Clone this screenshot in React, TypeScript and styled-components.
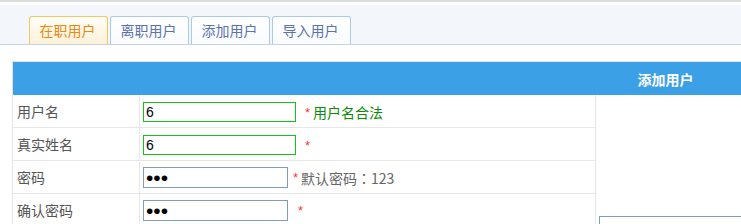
import type { ReactNode } from 'react';
import styled, { createGlobalStyle } from 'styled-components';

const GlobalStyle = createGlobalStyle`
  html, body {
    margin: 0;
    padding: 0;
    background: #fff;
    overflow: hidden;
    font-family: 'Noto Sans CJK SC', 'Liberation Sans', sans-serif;
    font-size: 14px;
  }
`;

// TC 字体的全角冒号居中显示，和原图一致
const Colon = styled.span`
  font-family: 'Noto Sans CJK TC', 'Noto Sans CJK SC', sans-serif;
`;

const tabs = ['在职用户', '离职用户', '添加用户', '导入用户'];

type FieldRow = {
  label: string;
  type: 'text' | 'password';
  value: string;
  ok?: boolean;
  starGap: number;
  note?: ReactNode;
  noteOk?: boolean;
};

const fields: FieldRow[] = [
  { label: '用户名', type: 'text', value: '6', ok: true, starGap: 9, note: '用户名合法', noteOk: true },
  { label: '真实姓名', type: 'text', value: '6', ok: true, starGap: 9 },
  {
    label: '密码',
    type: 'password',
    value: '123',
    starGap: 5,
    note: (
      <>
        默认密码<Colon>：</Colon>123
      </>
    ),
  },
  { label: '确认密码', type: 'password', value: '123', starGap: 10 },
];

const App = () => {
  return (
    <>
      <GlobalStyle />
      <TopLine />
      <TabBar>
        {tabs.map((t, i) => (
          <Tab key={t} $active={i === 0}>
            {t}
          </Tab>
        ))}
      </TabBar>
      <FormTable>
        <colgroup>
          <col style={{ width: 127 }} />
          <col style={{ width: 456 }} />
          <col />
        </colgroup>
        <thead>
          <tr>
            <HeadCell colSpan={3}>添加用户</HeadCell>
          </tr>
        </thead>
        <tbody>
          {fields.map((f, i) => (
            <tr key={f.label}>
              <LabelCell>{f.label}</LabelCell>
              <InputCell>
                <Field
                  type={f.type}
                  defaultValue={f.value}
                  $ok={f.ok}
                  readOnly
                />
                <Star $gap={f.starGap}>*</Star>
                {f.note && <Note $ok={f.noteOk}>{f.note}</Note>}
              </InputCell>
              {i === 0 && (
                <SideCell rowSpan={4}>
                  <SideBox />
                </SideCell>
              )}
            </tr>
          ))}
        </tbody>
      </FormTable>
    </>
  );
};

const TopLine = styled.div`
  height: 2px;
  background: #dcdcdc;
  margin-bottom: 3px;
`;

const TabBar = styled.div`
  height: 40px;
  box-sizing: border-box;
  background: #f3f6fb;
  border-bottom: 1px solid #c3d2e4;
  display: flex;
  align-items: flex-end;
  gap: 2px;
  padding-left: 29px;
`;

const Tab = styled.div<{ $active?: boolean }>`
  width: 79px;
  height: 28px;
  box-sizing: border-box;
  border: 1px solid ${({ $active }) => ($active ? '#f5c862' : '#a9cbe9')};
  border-bottom: none;
  border-radius: 3px 3px 0 0;
  background: ${({ $active }) =>
    $active
      ? 'linear-gradient(#fffefa, #fdf1d8)'
      : 'linear-gradient(#ffffff, #f9fbfe)'};
  color: ${({ $active }) => ($active ? '#ea8a10' : '#5a72ad')};
  font-size: 14px;
  display: flex;
  align-items: center;
  justify-content: center;
  padding: 0 2px 1px 0;
`;

const FormTable = styled.table`
  margin: 16px 0 0 12px;
  width: 1306px;
  table-layout: fixed;
  border-collapse: collapse;
`;

const HeadCell = styled.th`
  height: 33px;
  padding: 0;
  background: #3ca0e6;
  border-top: 1px solid #e4e4e4;
  border-left: 1px solid #e4e4e4;
  color: #fff;
  font-size: 14px;
  font-weight: bold;
  text-align: center;
`;

const LabelCell = styled.td`
  height: 32px;
  padding: 0 0 0 4px;
  border: 1px solid #e6e6e6;
  border-top: none;
  color: #555;
  font-size: 14px;
  white-space: nowrap;
`;

const InputCell = styled.td`
  height: 32px;
  padding: 0 0 0 3px;
  border: 1px solid #e6e6e6;
  border-top: none;
  white-space: nowrap;
  font-size: 14px;
`;

const SideCell = styled.td`
  vertical-align: top;
  padding: 121px 0 0 3px;
  border-left: 1px solid #e6e6e6;
`;

const SideBox = styled.div`
  width: 260px;
  height: 8px;
  border: 1px solid #7f9db9;
`;

const Field = styled.input<{ $ok?: boolean }>`
  box-sizing: border-box;
  width: ${({ type }) => (type === 'password' ? '145px' : '153px')};
  height: ${({ type }) => (type === 'password' ? '21px' : '20px')};
  margin: 0;
  padding: 0 2px;
  border: 1px solid ${({ $ok }) => ($ok ? '#19c019' : '#7f9db9')};
  font-family: 'Liberation Sans', Arial, sans-serif;
  font-size: ${({ type }) => (type === 'password' ? '21px' : '14px')};
  line-height: 1;
  color: #000;
  vertical-align: middle;
  outline: none;
`;

const Star = styled.span<{ $gap: number }>`
  margin-left: ${({ $gap }) => $gap}px;
  color: #f33;
  font-family: 'Liberation Sans', Arial, sans-serif;
  font-size: 13px;
  vertical-align: middle;
`;

const Note = styled.span<{ $ok?: boolean }>`
  margin-left: 3px;
  color: ${({ $ok }) => ($ok ? '#0a8a0a' : '#666')};
  font-size: 14px;
  vertical-align: middle;
`;

export default App;
